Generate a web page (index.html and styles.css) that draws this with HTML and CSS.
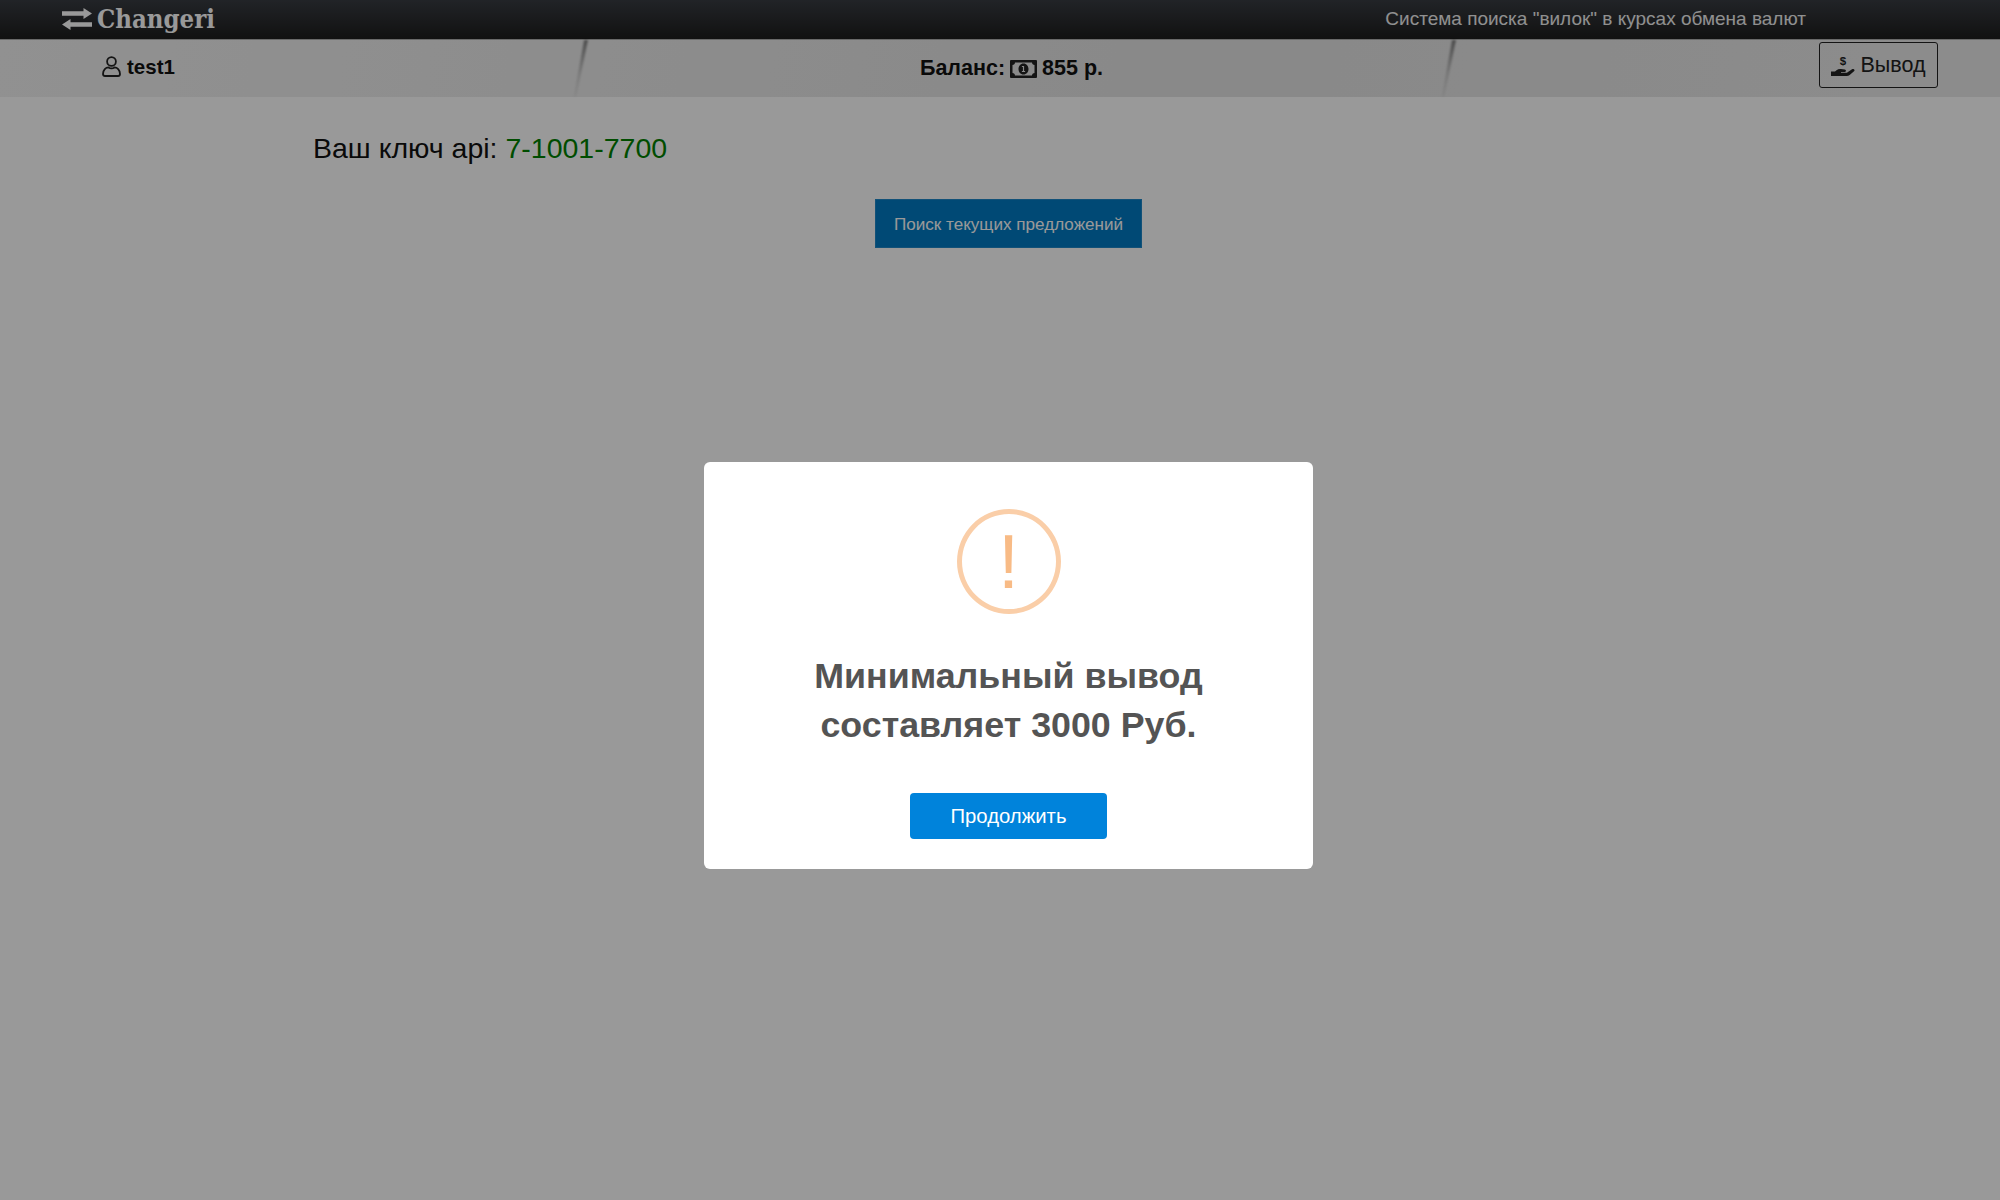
FILE: index.html
```html
<!DOCTYPE html>
<html lang="ru">
<head>
<meta charset="utf-8">
<title>Changeri</title>
<link rel="stylesheet" href="styles.css">
</head>
<body>
<header class="topbar">
  <a class="logo">
    <svg class="logo-icon" viewBox="0 0 30 22"><path fill="#fff" d="M0 3.300h21.500V0L30 5.500 21.500 11V7.700H0zM30 14.300H8.500V11L0 16.500 8.500 22v-3.300H30z"/></svg>
    <span class="logo-text">Changeri</span>
  </a>
  <span class="tagline">Система поиска "вилок" в курсах обмена валют</span>
</header>
<nav class="subbar">
  <div class="cell cell-user">
    <svg class="user-icon" viewBox="0 0 19 21" fill="none" stroke="#222" stroke-width="1.8"><circle cx="9.500" cy="5.500" r="4.400"/><path d="M1 18c0-4.500 3-6.600 5.500-6.600 1 .7 2 1 3 1s2-.3 3-1c2.500 0 5.500 2.100 5.500 6.600 0 1.300-.8 2-2 2H3c-1.200 0-2-.7-2-2z"/></svg>
    <span>test1</span>
  </div>
  <div class="cell cell-balance">
    <span>Баланс:</span>
    <svg class="money-icon" viewBox="0 0 27 18"><path fill="#222" fill-rule="evenodd" d="M1 0h25a1 1 0 0 1 1 1v16a1 1 0 0 1-1 1H1a1 1 0 0 1-1-1V1a1 1 0 0 1 1-1zm4 2.500c0 1.400-1.100 2.500-2.500 2.500v8C3.900 13 5 14.100 5 15.500h17c0-1.400 1.100-2.500 2.500-2.500V5C23.100 5 22 3.900 22 2.500zM13.500 3.500c3 0 5 2.500 5 5.500s-2 5.500-5 5.500-5-2.500-5-5.500 2-5.500 5-5.500zm-1.600 2.400v1h1v4h-1v1h3.200v-1h-1V5.900z"/></svg>
    <span>855 р.</span>
  </div>
  <div class="cell cell-action">
    <button class="withdraw">
      <svg class="hand-icon" viewBox="0 0 24 24"><path fill="#222" d="M0 17.500h4l1.500-1.300c1.300-1 2.800-1.400 4.500-1.200l3.800.5c1.500.2 1.500 2.400-.2 2.500H10v.8h5c.7 0 1.200-.3 1.600-.6l4.400-3c1.500-1 3.500.6 2 2.100l-4.300 3.700c-.9.700-1.800 1-3 1H0z"/><text x="12" y="10.500" class="dollar">$</text></svg>
      <span>Вывод</span>
    </button>
  </div>
  <div class="fold fold-a"><i class="fold-shape"></i></div>
  <div class="fold fold-b"><i class="fold-shape"></i></div>
</nav>
<main class="content">
  <p class="api-key">Ваш ключ api: <span class="api-value">7-1001-7700</span></p>
  <div class="search-row"><button class="search">Поиск текущих предложений</button></div>
</main>
<div class="overlay">
  <div class="modal" role="dialog">
    <div class="warn"><span>!</span></div>
    <h2 class="modal-title">Минимальный вывод<br>составляет 3000 Руб.</h2>
    <button class="confirm">Продолжить</button>
  </div>
</div>
</body>
</html>
```
FILE: styles.css
```css
* { box-sizing: border-box; }
html, body { margin: 0; height: 100%; }
body { background: #fff; font-family: "Liberation Sans", Arial, sans-serif; overflow: hidden; color: #111; }
button { font-family: inherit; cursor: pointer; }

.topbar { height: 39px; display: flex; align-items: center; justify-content: space-between; padding: 0 194px 0 62px; background: linear-gradient(#383c42, #1d1d1d); }
.logo { display: flex; align-items: center; gap: 5px; color: #fff; }
.logo-icon { width: 30px; height: 22px; margin-bottom: 2px; }
.logo-text { font-family: "DejaVu Serif Condensed", "DejaVu Serif", serif; font-weight: 700; font-size: 25.5px; line-height: 37px; }
.tagline { color: #f0f0f0; font-size: 19px; margin-bottom: 2px; }

.subbar { position: relative; height: 58px; display: grid; grid-template-columns: 583px 866px 1fr; border-top: 1px solid #b0b0b0; background: linear-gradient(100deg, #f2f2f2, #e4e4e4 60%, #eaeaea); }
.cell { display: flex; align-items: center; font-weight: 700; font-size: 20.500px; }
.cell-user { padding: 0 0 4px 102px; gap: 6px; }
.user-icon { width: 19px; height: 21px; }
.cell-balance { justify-content: center; gap: 5px; padding-right: 9px; font-size: 21.500px; }
.money-icon { width: 27px; height: 18px; }
.cell-action { justify-content: flex-end; padding: 0 62px 0 0; }
.withdraw { width: 119px; height: 46px; margin-top: -8px; display: flex; align-items: center; justify-content: center; gap: 5px; background: transparent; border: 1.500px solid #222; border-radius: 3px; color: #222; font-size: 21.500px; padding: 2px 0 0; }
.hand-icon { width: 24px; height: 24px; }
.dollar { font-size: 11.500px; font-weight: 700; fill: #222; font-family: "Liberation Sans", sans-serif; text-anchor: middle; }
.fold { position: absolute; top: 0; bottom: 0; width: 14px; filter: blur(1.1px); }
.fold-shape { display: block; height: 100%; background: linear-gradient(rgba(0,0,0,.45), rgba(0,0,0,.14) 60%, rgba(0,0,0,.04)); clip-path: polygon(72% 0, 100% 0, 14% 100%, 0 100%); }
.fold-a { left: 574px; }
.fold-b { left: 1442px; }

.content { padding: 0 0 0 17px; }
.api-key { margin: 35px 0 0 296px; font-size: 28.500px; line-height: 33px; color: #111; }
.api-value { color: #008000; }
.search-row { display: flex; justify-content: center; margin-top: 34px; }
.search { width: 267px; height: 49px; background: #007bc3; border: 1px solid #1e88c8; color: #fff; font-size: 17.100px; padding: 0; line-height: 49px; }

.overlay { position: fixed; inset: 0; background: rgba(0,0,0,.4); display: flex; justify-content: center; align-items: flex-start; padding: 462px 0 0 17px; }
.modal { width: 609px; height: 407px; background: #fff; border-radius: 6px; display: flex; flex-direction: column; align-items: center; padding-top: 47px; }
.warn { width: 104px; height: 105px; border: 5px solid #facea8; border-radius: 50%; display: flex; align-items: center; justify-content: center; }
.warn span { color: #f8bb86; font-size: 76px; line-height: 1; }
.modal-title { margin: 38px 0 0; color: #545454; font-size: 35.800px; line-height: 49px; font-weight: 700; text-align: center; }
.confirm { margin-top: 43px; width: 197px; height: 46px; background: #0083db; color: #fff; border: 0; border-radius: 4px; font-size: 20.300px; padding: 0; }
```
